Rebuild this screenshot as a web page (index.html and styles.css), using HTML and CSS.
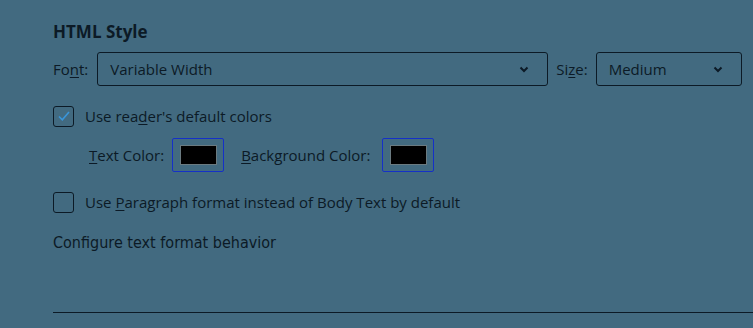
FILE: index.html
```html
<!DOCTYPE html>
<html>
<head>
<meta charset="utf-8">
<link rel="stylesheet" href="styles.css">
</head>
<body>
<div class="panel">
  <h2 class="title">HTML Style</h2>
  <div class="row font-row">
    <span class="label">Fo<u>n</u>t:</span>
    <div class="select select-font"><span>Variable Width</span><svg class="chev" width="10" height="7" viewBox="0 0 10 7"><path d="M1.5 1.5 L5 5 L8.5 1.5" fill="none" stroke="#0c1a26" stroke-width="2"/></svg></div>
    <span class="label size-label">Si<u>z</u>e:</span>
    <div class="select select-size"><span>Medium</span><svg class="chev" width="10" height="7" viewBox="0 0 10 7"><path d="M1.5 1.5 L5 5 L8.5 1.5" fill="none" stroke="#0c1a26" stroke-width="2"/></svg></div>
  </div>
  <div class="check-row first">
    <span class="box"><svg width="16" height="16" viewBox="0 0 16 16"><path d="M3 8.5 L6.3 11.8 L13 4" fill="none" stroke="#3a95d8" stroke-width="1.6"/></svg></span>
    <span class="label">Use rea<u>d</u>er's default colors</span>
  </div>
  <div class="color-row">
    <span class="label"><u>T</u>ext Color:</span>
    <span class="swatch"><span class="fill"></span></span>
    <span class="label bg-label"><u>B</u>ackground Color:</span>
    <span class="swatch swatch-bg"><span class="fill"></span></span>
  </div>
  <div class="check-row second">
    <span class="box"></span>
    <span class="label">Use <u>P</u>aragraph format instead of Body Text by default</span>
  </div>
  <div class="link">Configure text format behavior</div>
  <div class="rule"></div>
</div>
</body>
</html>
```
FILE: styles.css
```css
html, body {
  margin: 0;
  padding: 0;
  background: #426a80;
  width: 753px;
  height: 328px;
  overflow: hidden;
}
body {
  font-family: "Open Sans", "Noto Sans", sans-serif;
  color: #0c1a26;
  font-size: 15px;
}
.panel {
  padding: 19px 0 0 53px;
}
.title {
  margin: 0;
  font-size: 17px;
  font-weight: 700;
  line-height: 26px;
}
.row {
  display: flex;
  align-items: center;
  margin-top: 7px;
  height: 34px;
}
.label u { text-decoration-thickness: 1px; text-underline-offset: 2px; }
.select {
  box-sizing: border-box;
  height: 34px;
  border: 1px solid #0c1a26;
  border-radius: 3px;
  display: flex;
  align-items: center;
  justify-content: space-between;
  padding: 0 18px 0 12px;
}
.select-font { width: 451px; margin-left: 9px; }
.select-size { width: 146px; margin-left: 8px; }
.size-label { margin-left: 8px; }
.check-row {
  display: flex;
  align-items: center;
  height: 20px;
}
.check-row.first { margin-top: 20px; }
.check-row.second { margin-top: 20px; }
.box {
  box-sizing: border-box;
  width: 21px;
  height: 21px;
  border: 1px solid #0c1a26;
  border-radius: 3px;
  display: flex;
  align-items: center;
  justify-content: center;
  margin-right: 11px;
}
.color-row {
  display: flex;
  align-items: center;
  margin-top: 12px;
  padding-left: 36px;
  height: 34px;
}
.swatch {
  box-sizing: border-box;
  width: 52px;
  height: 34px;
  border: 1px solid #1530c8;
  border-radius: 2px;
  display: flex;
  align-items: center;
  justify-content: center;
  margin-left: 8px;
}
.swatch-bg { margin-left: 12px; }
.fill {
  box-sizing: border-box;
  width: 37px;
  height: 20px;
  background: #000;
  border: 1px solid #6a7a80;
}
.bg-label { margin-left: 17px; }
.link {
  margin-top: 21px;
  font-family: "DejaVu Sans Condensed", "DejaVu Sans", sans-serif;
  font-stretch: condensed;
  font-size: 16px;
  line-height: 20px;
}
.rule {
  margin-top: 59px;
  height: 1px;
  background: #0c1a26;
}
```
